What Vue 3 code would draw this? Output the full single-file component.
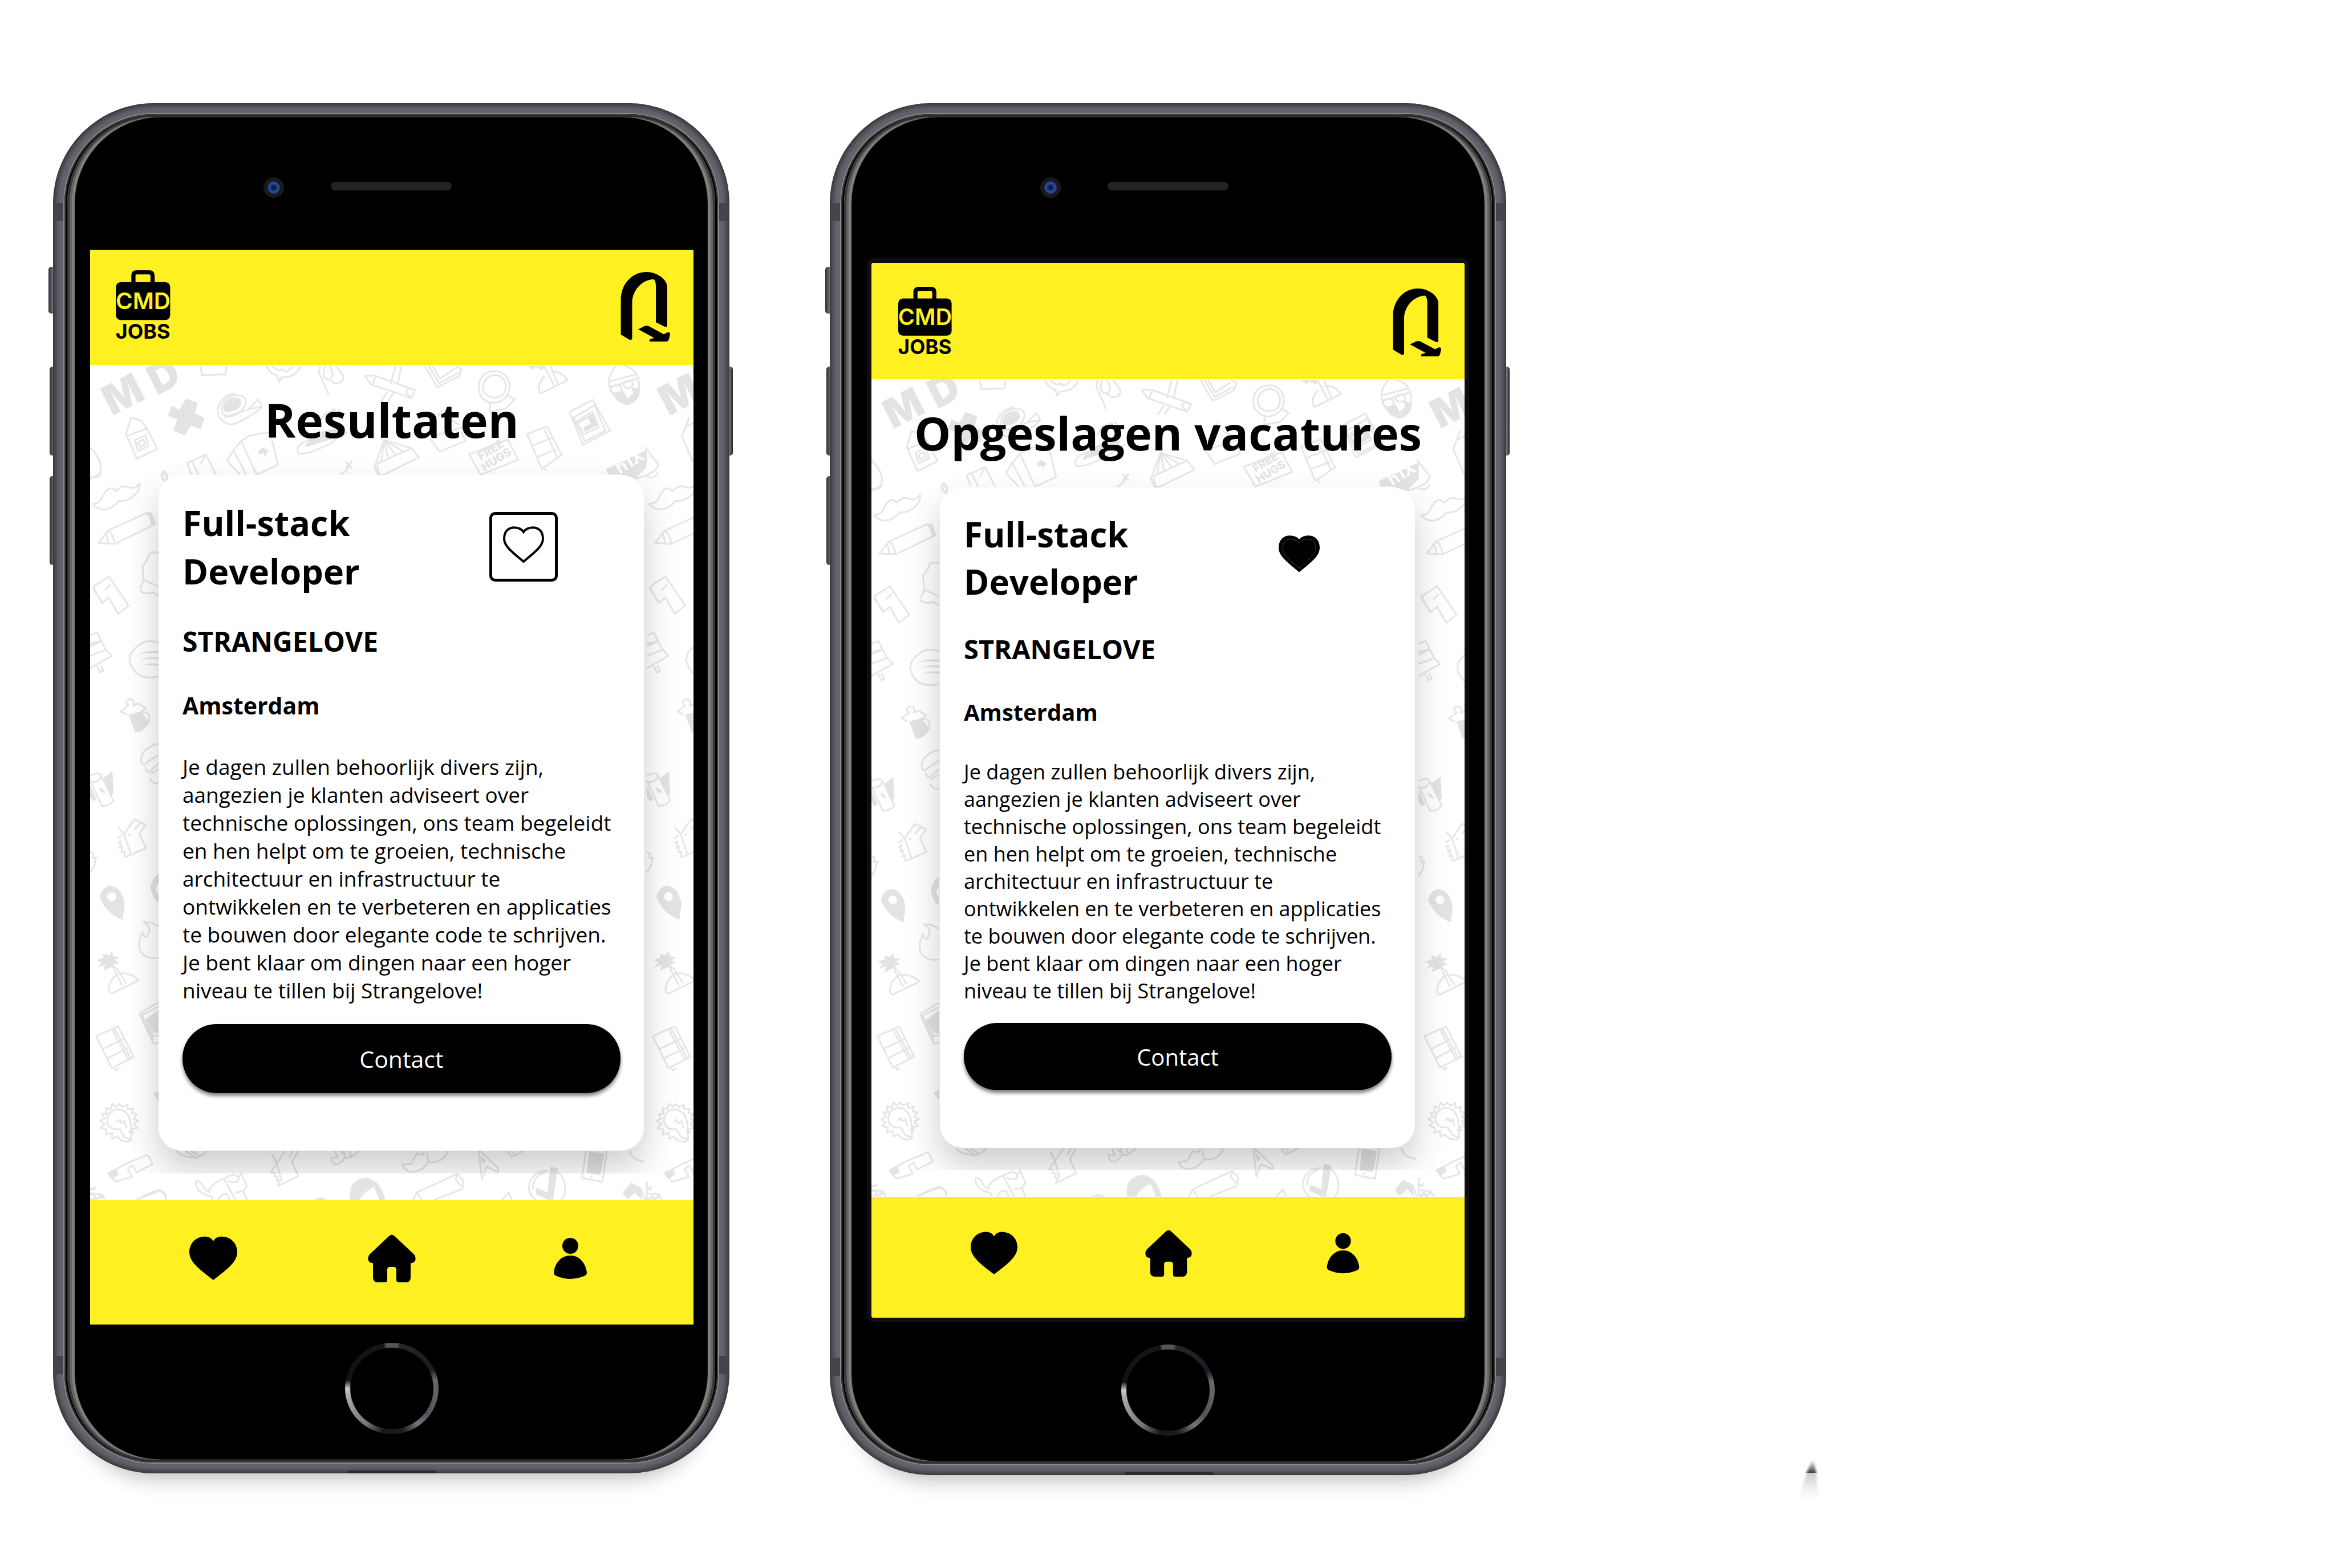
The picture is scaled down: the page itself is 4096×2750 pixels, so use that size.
<script setup>
const description =
  'Je dagen zullen behoorlijk divers zijn, aangezien je klanten adviseert over technische oplossingen, ons team begeleidt en hen helpt om te groeien, technische architectuur en infrastructuur te ontwikkelen en te verbeteren en applicaties te bouwen door elegante code te schrijven. Je bent klaar om dingen naar een hoger niveau te tillen bij Strangelove!'

const phones = [
  { id: 'results', title: 'Resultaten', saved: false },
  { id: 'saved', title: 'Opgeslagen vacatures', saved: true },
]

const topLines = [
  'M290 28L293 112L355 105L357 28', 'M460 28Q470 105 488 115L493 170L500 132Q540 130 548 28M475 28Q490 90 500 60Q515 110 528 28',
  'M600 28L596 85L622 285M612 28Q600 150 625 150L635 180Q660 190 660 120L640 28M625 150Q640 100 622 28',
  'M716 118L730 190L836 310L845 240L740 115ZM836 310L822 265M845 240L828 225L822 265M735 195L742 130', 'M795 28L782 190M810 28L800 190M774 255L758 335M790 260L776 335',
  'M870 28L903 215L960 120L965 60L950 28M880 28L908 180L958 90M890 28L910 140L950 50', 'M1050 78C1020 80 1008 160 1010 230C1012 300 1025 350 1050 352C1080 340 1092 260 1090 200C1088 130 1075 80 1050 78ZM1040 355L1038 425L1080 400L1103 320L1085 285M1050 110C1030 120 1018 180 1022 240C1030 310 1060 330 1075 270C1085 210 1080 110 1050 110Z',
  'M1195 90Q1220 60 1240 155L1170 270Q1158 200 1180 120M1180 40L1205 200M1195 28L1215 185', 'M1365 28Q1340 130 1350 220Q1365 350 1395 365Q1430 330 1425 200Q1425 60 1385 28M1348 165L1418 105M1352 215L1420 140M1370 200A15 35 0 1 0 1372 202M1400 160A12 32 0 1 0 1402 162',
  'M380 268C350 280 330 370 335 440C340 500 355 535 372 537C400 510 450 400 448 380L440 320L415 400M380 285C355 295 340 370 345 430C355 490 385 470 400 400C415 330 405 280 380 285ZM350 480L420 400L448 385',
  'M110 478L97 620L125 832L178 745L150 565L135 500ZM97 640L150 570M120 670L148 630L155 720L128 765ZM128 690L142 665L147 705L133 730Z', 'M255 870L303 795L330 970M255 870L266 970M268 855L285 970M303 795L290 880',
  'M415 635L470 600L490 885L435 968L395 680ZM395 680L375 760L408 968M375 760L358 850L392 968', 'M640 405L612 440L598 520M655 450L645 400M545 790Q530 720 570 670L650 620Q640 690 600 740Q570 790 545 790ZM655 640L670 600',
  'M765 670L740 900L750 970L765 968L855 820L835 740ZM765 670L835 740L745 880M765 670L815 770M765 670L795 800M765 670L775 830M765 670L757 860M747 890L752 965', 'M885 660L908 770L975 680L965 600M890 640L970 560M905 470L915 410M930 480L960 540',
  'M652 968Q675 930 672 870M665 855L682 915M682 855L665 915', 'M985 795L1085 665L1112 840L1015 970ZM1135 620L1187 552L1225 800L1173 918ZM1147 720L1200 650M1158 820L1212 750M1180 580L1215 830M1180 915L1185 935',
  'M1245 430L1305 325L1350 590L1280 712ZM1255 480L1310 370L1338 590L1285 680ZM1262 510L1305 425L1320 560L1283 620Z', 'M1440 730L1475 880Q1470 960 1415 1005M4 735Q45 880 25 970L4 1005M195 935Q180 980 200 1030Q210 980 195 935',
  'M1555 475L1536 640L1565 860M1545 560L1568 520',
]
const topFills = [
  'M205 465L215 375L235 410L252 312L283 350L275 440L300 480L290 578L265 545L248 632L220 590L230 490Z', 'M375 305C350 320 345 400 350 420C365 450 395 400 395 350C395 310 385 300 375 305Z',
  'M450 735Q435 770 442 795L452 785L458 820L460 780Q475 770 450 735Z', 'M600 600L660 560L650 640L560 735Q560 690 600 600Z', 'M1340 920L1445 755L1445 900L1415 1005L1375 968L1345 968Z',
  'M1362 270Q1370 360 1395 362Q1425 340 1425 230L1405 215L1410 270L1395 310L1385 250Z', 'M1265 515L1305 440L1318 540L1285 600L1280 560L1300 530L1292 480L1270 530Z', 'M1135 28L1150 65L1158 40L1175 70L1182 28Z',
]
const sideLines = [
  'M35 72Q90 73 115 60Q170 28 235 45Q290 30 345 36Q400 42 440 28Q445 45 380 57Q320 68 260 66Q200 85 120 84Q60 82 35 72Z', 'M85 156L165 130L500 92L540 92L575 116L225 158ZM165 130Q210 135 225 158M148 137Q165 142 168 156M500 92Q540 100 548 118M515 92Q552 100 560 117',
  'M38 250L175 228L345 290L255 308L175 273L115 285ZM38 254L115 282M140 257L190 245', 'M12 354L75 348L112 366L12 378M90 356L150 385L12 398M112 366L12 372M150 385L200 398L12 425M75 420L100 434L128 430L105 420',
  'M605 370Q500 360 420 378Q355 390 352 406Q370 430 440 440Q520 448 605 442', 'M445 255L475 235L465 205Q510 195 520 180Q560 173 605 178M475 235L605 250M445 258Q480 268 560 262L605 270',
  'M275 517Q320 510 345 504Q300 497 350 491Q400 490 385 505L430 500L495 511L455 517L520 522Q530 540 500 546M275 517L330 524', 'M605 586Q510 592 470 606Q440 620 460 627Q480 635 500 627L605 610M490 636Q500 650 530 645L605 628M530 660Q550 675 605 670M530 652L605 640',
  'M12 655Q90 645 110 655L215 708Q180 720 115 720L12 665M12 668Q90 672 110 655', 'M255 766L305 780L395 748L490 760L440 780L495 810L365 824L305 780M250 790L290 782M250 800L275 795L270 810L290 805L285 820L310 817L310 830L365 824M395 770L450 755M340 782L360 781',
  'M12 818L40 822L35 832L65 830L45 850L12 862', 'M470 968Q550 968 605 978M470 968Q560 980 500 1000Q470 1000 465 990Q420 1010 445 1030Q490 1050 605 1045',
  'M175 1110Q200 1080 300 1078Q400 1082 430 1094L200 1122Q170 1120 175 1110ZM245 1068L325 1100M215 1068L290 1105', 'M605 1140L440 1165L560 1230L605 1227M605 1150L460 1168L560 1222M605 1158L490 1180L560 1213L605 1211',
  'M65 1213L255 1192L390 1258L200 1282ZM120 1241L305 1219M155 1262L350 1237M200 1198L345 1265M220 1196L365 1262M225 1282L240 1287L262 1281',
  'M260 1358L290 1365L335 1360L335 1370L385 1368L375 1378L415 1380L390 1390L430 1395L390 1400L420 1410L375 1412L385 1420L345 1418M95 1395L140 1390L115 1380L155 1380L150 1367L190 1370L205 1358L235 1365L260 1358M95 1395L140 1402L105 1410L155 1413L150 1425L200 1420L205 1433L245 1428L280 1437M260 1370Q160 1372 160 1395Q170 1415 270 1413L310 1430L370 1435L365 1415Q370 1375 260 1370ZM245 1398L270 1392L285 1400L310 1395L330 1410M280 1437L340 1440L370 1435',
  'M170 1507L320 1487L500 1468Q530 1470 550 1488L415 1505L380 1490L340 1498L375 1515L230 1525Z', 'M12 1540L55 1542M12 1550L120 1553Q140 1562 12 1562M415 1563L610 1545Q670 1550 668 1563', 'M12 14Q80 20 110 5', 'M635 10Q655 0 680 18Q640 25 635 10',
]
const sideFills = [
  'M95 915Q120 892 190 891Q290 895 312 930L295 964Q150 950 95 915ZM160 915Q190 930 235 920Q245 905 200 905Q165 905 160 915Z', 'M345 524L455 517L520 540Q480 562 400 562Z', 'M130 660L205 645L215 690L195 700ZM12 675L70 705L40 710L12 700Z', 'M85 680L125 683L150 693L110 690Z',
  'M72 1050L130 1045L125 1037L180 1040L205 1030L210 1042L270 1043L225 1050L265 1056L215 1060L250 1070L195 1065L130 1073L140 1060L80 1066L110 1056Z', 'M605 863Q540 875 535 897Q560 922 605 926L605 910Q560 900 605 885Z', 'M410 396Q500 386 605 388V393Q500 390 410 396ZM440 408Q500 400 605 401V406Q500 403 440 408ZM465 419Q530 412 605 415V420Q530 417 465 419Z',
  'M605 1160L495 1180L560 1205L605 1208ZM560 1337L605 1330V1354Z', 'M160 1507L240 1498L260 1510L200 1520Z',
]
const bottomLines = [
  'M228 40Q235 95 280 100Q300 80 305 40M250 40L275 95M265 40L285 85', 'M475 70L487 150L510 40M487 150L472 225L483 235L480 260L490 265L487 300L495 300L490 345L543 260L527 140L543 40M530 40L520 95M487 150L500 300',
  'M637 40L645 105L628 100Q630 160 645 158Q660 130 662 100Q680 115 700 40M650 40L665 85L660 40M675 40L680 95', 'M870 40L865 75L850 65L835 155L812 160Q820 230 845 222Q870 200 878 140Q920 150 930 40M875 60L880 130',
  'M1010 40L1018 290L1030 180L1060 225L1060 190L1012 40', 'M1083 40L1095 95L1128 40M1095 40L1102 70', 'M1288 40L1277 275L1330 310L1342 40M1300 255L1304 275', 'M1400 40Q1405 120 1438 135',
  'M1188 215C1150 210 1138 320 1140 380C1145 430 1155 465 1160 465M1215 225C1240 300 1238 430 1222 465M1180 235C1158 240 1150 320 1150 370', 'M850 400L955 240L970 300L968 370L895 465M850 400L840 465M850 400L862 465M955 240L950 290L965 350',
  'M320 465L318 435Q275 400 278 305Q290 290 300 370L312 400Q310 340 350 280L375 245L388 270L395 235L410 345L400 390L410 465M350 280L380 465M335 465Q345 400 360 420L365 465M360 300Q390 340 388 270M400 390L380 400',
  'M680 465Q670 300 718 280Q755 300 765 465M700 465Q705 400 740 345L755 465', 'M125 465L155 410L180 378Q205 400 200 465', 'M1070 465L1088 400L1095 465', 'M1445 300L1445 465M1445 370L1460 350M1450 465Q1460 400 1465 465Q1478 400 1485 465M1403 320L1430 370L1440 465M1385 400L1400 350M4 380L20 355M4 420Q15 400 20 465Q35 390 42 465',
]
const bottomFills = [
  'M1158 360L1188 400L1195 180L1215 190L1202 465L1190 465L1158 415Z', 'M1295 45L1335 65L1325 250L1290 235Z', 'M680 430Q680 290 718 282Q755 290 768 465L755 465L740 345Q705 380 700 465L680 465Z', 'M583 465Q600 425 620 465Z', 'M1403 320L1430 370L1432 465L1415 400L1395 460L1383 410Z', 'M1013 80L1028 125L1022 160Z',
]

// Each band: placement on the sheet, outlined shapes and solid shapes.
const doodleBands = [
  { at: 'matrix(.678 0 0 .2036 -2.7 -4.8)', lines: topLines, fills: topFills },
  { at: 'matrix(.2036 0 0 .8182 -2.7 184.6)', lines: sideLines, fills: sideFills },
  { at: 'matrix(.2036 0 0 .8182 974.3 184.6)', lines: sideLines, fills: sideFills },
  { at: 'matrix(.678 0 0 .2036 -2.7 1369.8)', lines: bottomLines, fills: bottomFills },
]
</script>

<template>
  <div class="board">
    <article v-for="phone in phones" :key="phone.id" class="phone" :class="phone.id">
      <i class="key mute"></i><i class="key up"></i><i class="key down"></i><i class="key power"></i>
      <div class="frame">
        <i class="band band-top"></i><i class="band band-bottom"></i><i class="chin"></i>
        <div class="rim">
          <div class="glass">
            <div class="bezel-top">
              <i class="camera"></i>
              <i class="speaker"></i>
            </div>

            <div class="screen">
              <header class="top">
                <a href="#" aria-label="CMD Jobs">
                  <svg class="logo" viewBox="92 100 480 600" aria-hidden="true">
                    <path d="M248 215V150Q248 123 278 123H382Q413 123 413 150V215" fill="none" stroke="#000" stroke-width="36" />
                    <rect x="97" y="207" width="468" height="327" rx="42" />
                    <text x="332" y="441" text-anchor="middle" class="logo-cmd">CMD</text>
                    <text x="330" y="694" text-anchor="middle" class="logo-jobs">JOBS</text>
                  </svg>
                </a>
                <a href="#" aria-label="Terug">
                  <svg class="back" viewBox="125 115 435 612" aria-hidden="true">
                    <path d="M128 662V350C132 230 220 120 350 120C440 120 520 180 530 240V585Q525 600 508 594L432 556V240Q428 180 405 183C310 190 226 280 226 385V698Q220 714 200 705Z" />
                    <path d="M278 616L335 588Q355 582 375 592L500 659L535 642Q556 640 555 660L545 702Q540 722 522 722H378Q372 712 382 702L418 692Z" />
                  </svg>
                </a>
              </header>

              <main>
                <svg class="doodles" viewBox="0 0 1059 1465" preserveAspectRatio="none" aria-hidden="true">
                  <g v-for="(band, b) in doodleBands" :key="b" :transform="band.at">
                    <path v-for="(d, n) in band.lines" :key="'l' + n" :d="d" class="outline" />
                    <path v-for="(d, n) in band.fills" :key="'f' + n" :d="d" class="solid" />
                  </g>
                  <g class="letters">
                    <text transform="translate(38 90) rotate(-27)">M</text>
                    <text transform="translate(1015 90) rotate(-27)">M</text>
                    <text transform="translate(117 54) rotate(-27)">D</text>
                  </g>
                  <g class="sign">
                    <text transform="translate(686 168) rotate(-32)">FREE</text>
                    <text transform="translate(692 187) rotate(-32)">HUGS</text>
                  </g>
                  <text class="tag" transform="translate(930 192) rotate(-32)">h1X</text>
                </svg>

                <div class="content">
                  <h1>{{ phone.title }}</h1>
                  <section class="card">
                    <div class="card-head">
                      <h2>Full-stack<br />Developer</h2>
                      <button class="like" :class="{ saved: phone.saved }" type="button" aria-label="Vacature opslaan">
                        <svg viewBox="0 0 74 67" aria-hidden="true">
                          <path d="M37 11C44 0 71 -2 71 23C71 36 57 46 37 63C17 46 3 36 3 23C3 -2 30 0 37 11Z" />
                          <path v-if="phone.saved" class="seam" d="M37 15C46 4 66 4 66 24C66 33 55 43 37 58C19 43 8 33 8 24C8 4 28 4 37 15Z" />
                        </svg>
                      </button>
                    </div>
                    <h3>STRANGELOVE</h3>
                    <h4>Amsterdam</h4>
                    <p>{{ description }}</p>
                    <button class="contact" type="button">Contact</button>
                  </section>
                </div>
              </main>

              <nav>
                <a href="#" aria-label="Opgeslagen">
                  <svg viewBox="0 0 84 84" aria-hidden="true">
                    <path d="M42 12C46 4 54 3 60 4C74 5 84 17 84 31C84 49 65 62 42 80C19 62 0 49 0 31C0 17 10 5 24 4C30 3 38 4 42 12Z" />
                  </svg>
                </a>
                <a href="#" aria-label="Home">
                  <svg viewBox="0 0 84 84" aria-hidden="true">
                    <path d="M37 3Q42 -2 47 3L81 35Q85 40 83 46Q80 51 75 50V77Q74 83 68 84H54Q50 84 50 80V61Q49 57 46 57H38Q35 57 34 61V80Q34 84 30 84H16Q10 83 9 77V50Q4 51 1 46Q-1 40 3 35Z" />
                  </svg>
                </a>
                <a href="#" aria-label="Profiel">
                  <svg viewBox="0 0 84 84" aria-hidden="true">
                    <circle cx="42" cy="20" r="14" />
                    <path d="M42 37C58 37 69 50 71 67Q71 71 66 73Q42 83 18 73Q13 71 13 67C15 50 26 37 42 37Z" />
                  </svg>
                </a>
              </nav>
            </div>

            <div class="bezel-bottom"><i class="home"></i></div>
          </div>
        </div>
      </div>
    </article>

    <aside class="rest">
      <svg class="smudge" viewBox="0 0 60 90" aria-hidden="true">
        <defs>
          <linearGradient id="smudge-dark" x1="0" y1="0" x2="0" y2="1">
            <stop offset="0" stop-color="#555" stop-opacity="0" />
            <stop offset="1" stop-color="#333" />
          </linearGradient>
          <linearGradient id="smudge-light" x1="0" y1="0" x2="0" y2="1">
            <stop offset="0" stop-color="#999" stop-opacity=".5" />
            <stop offset="1" stop-color="#ddd" stop-opacity="0" />
          </linearGradient>
          <filter id="smudge-soft"><feGaussianBlur stdDeviation="2 0" /></filter>
        </defs>
        <path d="M36 2L42 28H24Z" fill="url(#smudge-dark)" filter="url(#smudge-soft)" />
        <path d="M24 29H42L46 78H10Z" fill="url(#smudge-light)" filter="url(#smudge-soft)" />
      </svg>
    </aside>
  </div>
</template>

<style>
body {
  background: #fff;
}
</style>

<style scoped>
.board {
  display: flex;
  gap: 176px;
  align-items: flex-start;
  box-sizing: border-box;
  min-height: 100vh;
  padding: 181px 0 0 93px;
  overflow: hidden;
  font-family: "Open Sans", "Noto Sans", sans-serif;
  color: #000;
}
i {
  display: block;
}

/* Device */
.phone {
  position: relative;
  flex: none;
  width: 1186px;
  --h1: 82px;
  --h1-line: 112px;
  --h2: 61px;
  --h2-line: 85px;
  --h3: 48px;
  --h3-line: 65px;
  --h3-gap: 48px;
  --h4: 41px;
  --h4-line: 56px;
  --h4-gap: 52px;
  --text: 37px;
  --text-line: 49px;
  --text-gap: 55px;
  --button-gap: 35px;
}
.phone.saved {
  --h1: 81px;
  --h1-line: 110px;
  --h2: 60px;
  --h2-line: 83px;
  --h3: 47px;
  --h3-line: 64px;
  --h3-gap: 44px;
  --h4: 40px;
  --h4-line: 55px;
  --h4-gap: 51px;
  --text: 36px;
  --text-line: 48px;
  --text-gap: 54px;
  --button-gap: 32px;
}
.key {
  position: absolute;
  left: -6px;
  width: 14px;
  height: 156px;
  border-radius: 5px;
  background: linear-gradient(90deg, #2d2d32, #77767e 60%, #222);
}
.mute {
  left: -8px;
  top: 287px;
  height: 82px;
}
.up {
  top: 462px;
}
.down {
  top: 654px;
}
.power {
  left: auto;
  right: -6px;
  top: 462px;
}
.frame {
  position: relative;
  padding: 19px 20px;
  border-radius: 176px;
  background: #66656d;
  box-shadow: inset 0 0 12px 3px #252528, 0 46px 36px -44px rgba(0, 0, 0, .28), 0 70px 40px -50px rgba(0, 0, 0, .05);
}
.band {
  position: absolute;
  left: 2px;
  right: 2px;
  height: 32px;
  background: #44444a;
}
.band-top {
  top: 175px;
}
.band-bottom {
  bottom: 174px;
}
.chin {
  position: absolute;
  left: 516px;
  right: 512px;
  bottom: 0;
  height: 5px;
  background: #2c2c2f;
  border-radius: 8px 8px 0 0;
}
.rim {
  position: relative;
  padding: 5px;
  border-radius: 157px;
  background: #2d2d2c;
  box-shadow: 0 0 0 2px #8a8990, inset 0 0 0 2px #3b3b3a, inset 5px 0 0 #000, inset -5px 0 0 #000;
}
.glass {
  padding: 0 38px 0 40px;
  border-radius: 152px;
  background: #000;
  box-shadow: inset 4px 0 0 #383838, inset -4px 0 0 #383838, inset 8px 0 1px #646361, inset -8px 0 1px #646361, inset 13px 0 1px #838180, inset -13px 0 1px #838180;
}
.saved .glass {
  padding: 0 40px;
}
.bezel-top {
  display: flex;
  align-items: flex-start;
  gap: 82px;
  box-sizing: border-box;
  height: 233px;
  padding: 106px 0 0 304px;
}
.saved .bezel-top {
  height: 248px;
}
.camera {
  box-sizing: border-box;
  width: 36px;
  height: 36px;
  border: 7px solid #191919;
  border-radius: 50%;
  background: radial-gradient(circle at 50% 50%, #0d1c4c 20%, #2d4fa3 50%, #1b2f6b 75%);
}
.speaker {
  width: 212px;
  height: 15px;
  margin-top: 8px;
  border-radius: 8px;
  background: #232323;
}
.bezel-bottom {
  display: flex;
  justify-content: center;
  box-sizing: border-box;
  height: 237px;
  padding-top: 32px;
}
.saved .bezel-bottom {
  height: 244px;
  padding-top: 39px;
}
.home {
  width: 164px;
  height: 160px;
  border-radius: 50%;
  background: radial-gradient(closest-side, #000 88%, transparent 90%), conic-gradient(#55545b 0 2%, #26262b 3%, #1b1b20 18%, #6a6970 22%, #55545b 35%, #77767c 40%, #1c1c22 46%, #17171b 53%, #77767c 60%, #a9a9ac 72%, #c9c9c9 75%, #111116 78%, #15151a 97%, #55545b 98%);
}

/* App screen */
.screen {
  overflow: hidden;
  background: #fff;
}
.saved .screen {
  border: 8px solid #0e0e0e;
  border-radius: 12px;
}
.top {
  display: flex;
  justify-content: space-between;
  box-sizing: border-box;
  height: 202px;
  padding: 35px 40px 0 44px;
  background: #fff021;
}
.saved .top {
  height: 204px;
  padding: 41px 40px 0 46px;
}
.logo {
  display: block;
  width: 98px;
  height: 122px;
}
.saved .logo {
  width: 96px;
  height: 120px;
}
.logo-cmd {
  font: 600 198px Inter, sans-serif;
  fill: #fff021;
}
.logo-jobs {
  font: 700 176px Inter, sans-serif;
}
.back {
  display: block;
  width: 88px;
  height: 124px;
  margin-top: 3px;
}
.saved .back {
  width: 86px;
  height: 121px;
}
main {
  position: relative;
  padding-bottom: 47px;
}
.doodles {
  position: absolute;
  inset: 0;
  width: 100%;
  height: 100%;
}
.outline {
  fill: none;
  stroke: #e6e6e6;
  stroke-width: 3px;
  stroke-linejoin: round;
  vector-effect: non-scaling-stroke;
}
.solid {
  fill: #e3e3e3;
}
.letters {
  font: 900 72px Inter, sans-serif;
  fill: #e3e3e3;
}
.sign {
  font: 800 20px Inter, sans-serif;
  fill: #e3e3e3;
}
.tag {
  font: 700 30px Inter, sans-serif;
  fill: #fff;
}
.content {
  position: relative;
  padding: 40px 87px 40px 120px;
  overflow: hidden;
}
.saved .content {
  padding: 39px 87px 39px 120px;
}
h1,
h2,
h3,
h4,
p {
  margin: 0;
}
h1 {
  margin: 0 -87px 41px -120px;
  font-size: var(--h1);
  line-height: var(--h1-line);
  text-align: center;
}
.card {
  padding: 41px 41px 101px 42px;
  border-radius: 40px;
  background: #fff;
  box-shadow: 0 30px 60px rgba(0, 0, 0, .2);
}
.card-head {
  display: flex;
  justify-content: space-between;
  align-items: center;
}
h2 {
  font-size: var(--h2);
  line-height: var(--h2-line);
}
h3 {
  margin-top: var(--h3-gap);
  font-size: var(--h3);
  line-height: var(--h3-line);
}
h4 {
  margin-top: var(--h4-gap);
  font-size: var(--h4);
  line-height: var(--h4-line);
}
p {
  margin: var(--text-gap) 0 var(--button-gap);
  font-size: var(--text);
  line-height: var(--text-line);
}
.like {
  display: flex;
  justify-content: center;
  box-sizing: border-box;
  width: 120px;
  height: 122px;
  margin-right: 110px;
  padding: 19px 0 0;
  border: 5px solid #000;
  border-radius: 10px;
  background: none;
}
.like.saved {
  margin-right: 102px;
  padding-top: 15px;
  border-color: transparent;
}
.like svg {
  width: 74px;
  height: 67px;
  fill: none;
  stroke: #000;
  stroke-width: 4px;
}
.like.saved svg {
  fill: #000;
}
.like .seam {
  stroke: #444;
  stroke-width: 1px;
}
.contact {
  display: block;
  width: 100%;
  height: 121px;
  padding: 0;
  border: 0;
  border-radius: 60px;
  background: #000;
  color: #fff;
  font: 400 var(--h4) "Open Sans", "Noto Sans", sans-serif;
  box-shadow: 0 5px 6px rgba(0, 0, 0, .5);
}
.saved .contact {
  height: 118px;
}
nav {
  display: grid;
  grid-template-columns: repeat(3, 1fr);
  justify-items: center;
  box-sizing: border-box;
  height: 218px;
  padding: 60px 60px 0;
  background: #fff021;
}
.saved nav {
  height: 212px;
  padding: 58px 60px 0 62px;
}
nav svg {
  display: block;
  width: 84px;
  height: 84px;
}
.saved nav svg {
  width: 82px;
  height: 82px;
}

.rest {
  align-self: stretch;
  padding: 2375px 0 0 326px;
}
.smudge {
  display: block;
  width: 60px;
  height: 90px;
}
</style>
